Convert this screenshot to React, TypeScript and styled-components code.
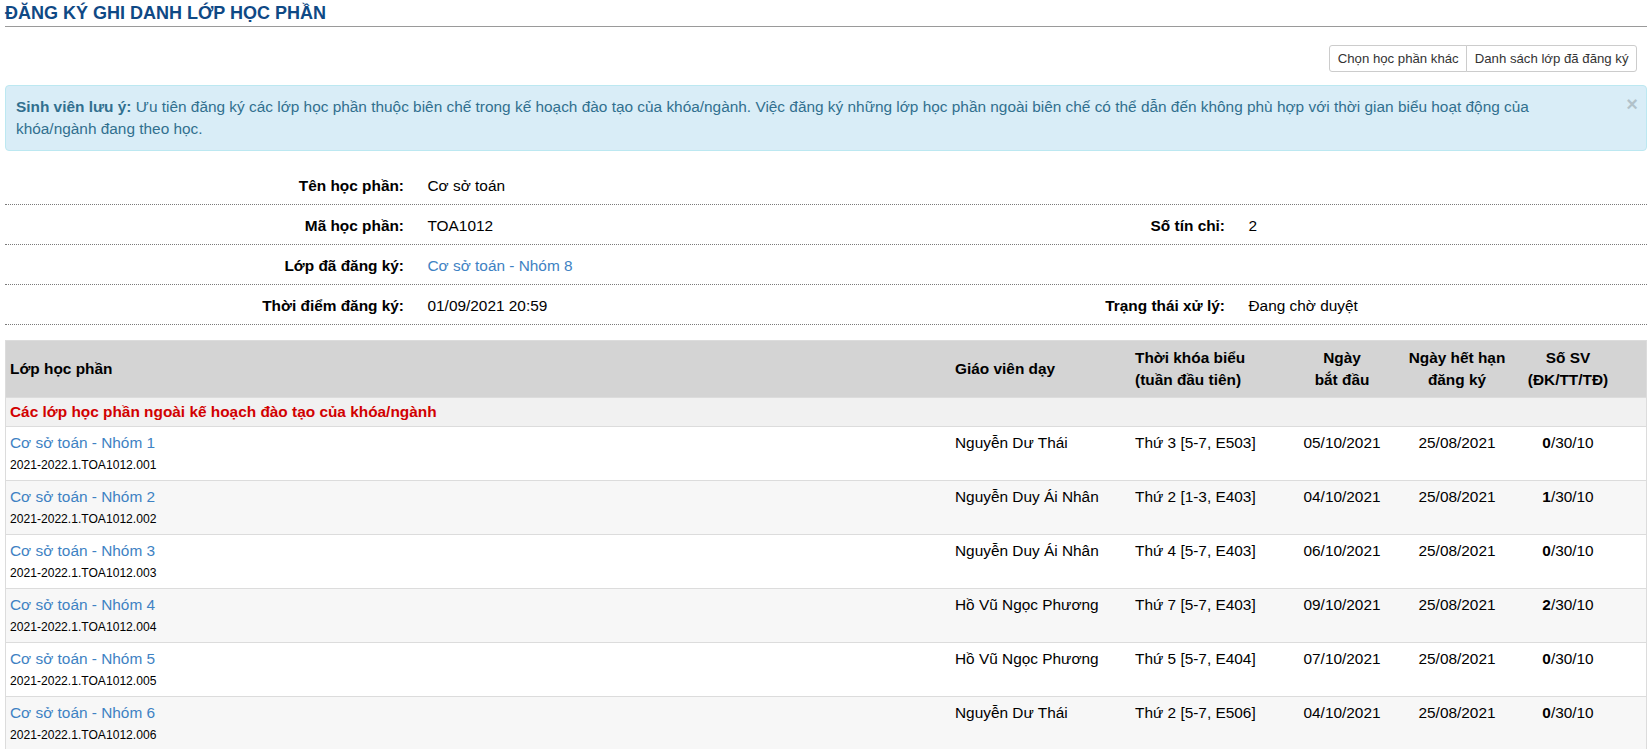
import React from "react";
import styled, { createGlobalStyle } from "styled-components";

const Global = createGlobalStyle`
  html, body { margin: 0; padding: 0; background: #fff; }
  body {
    font-family: "Liberation Sans", Arial, sans-serif;
    font-size: 15.4px;
    line-height: 22px;
    color: #000;
  }
`;

const Page = styled.div`
  padding: 0 4px 0 5px;
`;

const Title = styled.h1`
  margin: 0;
  padding: 3px 0;
  font-size: 18px;
  line-height: 20px;
  font-weight: bold;
  color: #0f4985;
  border-bottom: 1px solid #9a9a9a;
`;

const Toolbar = styled.div`
  display: flex;
  justify-content: flex-end;
  margin-top: 18px;
  padding-right: 10px;
`;

const ButtonGroup = styled.div`
  display: flex;
`;

const Button = styled.button`
  font-family: "Liberation Sans", Arial, sans-serif;
  font-size: 13.2px;
  line-height: 19px;
  padding: 3px 7.5px;
  border: 1px solid #ccc;
  background: #fff;
  color: #333;
  cursor: pointer;
  border-radius: 0;
  & + & { margin-left: -1px; }
  &:first-child { border-radius: 3px 0 0 3px; }
  &:last-child { border-radius: 0 3px 3px 0; }
`;

const Alert = styled.div`
  margin-top: 13px;
  display: flex;
  align-items: flex-start;
  padding: 10px 8px 10px 10px;
  border: 1px solid #bce8f1;
  border-radius: 4px;
  background: #d9edf7;
  color: #31708f;
`;

const AlertText = styled.div`
  flex: 1;
  padding-right: 20px;
`;

const Close = styled.button`
  border: 0;
  background: transparent;
  padding: 0;
  margin-top: -3px;
  font-family: "Liberation Sans", Arial, sans-serif;
  font-size: 20px;
  line-height: 22px;
  font-weight: bold;
  color: #000;
  opacity: 0.18;
  cursor: pointer;
`;

const Info = styled.div`
  margin-top: 14px;
`;

const InfoRow = styled.div`
  box-sizing: border-box;
  display: grid;
  grid-template-columns: repeat(4, 1fr);
  align-items: center;
  height: 40px;
  padding-top: 3px;
  border-bottom: 1px dotted #7a7a7a;
`;

const Label = styled.div`
  font-weight: bold;
  text-align: right;
  padding-right: 11.5px;
`;

const Value = styled.div`
  padding-left: 12px;
`;

const Link = styled.a`
  color: #3e82c3;
  text-decoration: none;
  cursor: pointer;
`;

const Table = styled.table`
  margin-top: 15px;
  width: 100%;
  border-collapse: collapse;
  table-layout: fixed;
  border: 1px solid #dcdcdc;
`;

const Th = styled.th<{ $w?: number; $align?: string }>`
  width: ${(p) => (p.$w ? `${p.$w}px` : "auto")};
  background: #d4d4d4;
  padding: 6px 4px;
  font-weight: bold;
  text-align: ${(p) => p.$align || "left"};
  vertical-align: middle;
  line-height: 22px;
`;

const GroupCell = styled.td`
  background: #f1f1f1;
  color: #d20000;
  font-weight: bold;
  padding: 3px 4px;
  border-top: 1px solid #dcdcdc;
`;

const Row = styled.tr<{ $striped: boolean }>`
  background: ${(p) => (p.$striped ? "#f7f7f7" : "#fff")};
`;

const Td = styled.td<{ $align?: string }>`
  padding: 5px 4px 4px;
  vertical-align: top;
  text-align: ${(p) => p.$align || "left"};
  border-top: 1px solid #dcdcdc;
`;

const Code = styled.div`
  font-size: 12.1px;
  line-height: 22px;
`;

const rows = [
  { n: 1, t: "Nguyễn Dư Thái", s: "Thứ 3 [5-7, E503]", d: "05/10/2021", c: 0 },
  { n: 2, t: "Nguyễn Duy Ái Nhân", s: "Thứ 2 [1-3, E403]", d: "04/10/2021", c: 1 },
  { n: 3, t: "Nguyễn Duy Ái Nhân", s: "Thứ 4 [5-7, E403]", d: "06/10/2021", c: 0 },
  { n: 4, t: "Hồ Vũ Ngọc Phương", s: "Thứ 7 [5-7, E403]", d: "09/10/2021", c: 2 },
  { n: 5, t: "Hồ Vũ Ngọc Phương", s: "Thứ 5 [5-7, E404]", d: "07/10/2021", c: 0 },
  { n: 6, t: "Nguyễn Dư Thái", s: "Thứ 2 [5-7, E506]", d: "04/10/2021", c: 0 },
];

export default function App() {
  return (
    <>
      <Global />
      <Page>
        <Title>ĐĂNG KÝ GHI DANH LỚP HỌC PHẦN</Title>
        <Toolbar>
          <ButtonGroup>
            <Button>Chọn học phần khác</Button>
            <Button>Danh sách lớp đã đăng ký</Button>
          </ButtonGroup>
        </Toolbar>
        <Alert>
          <AlertText>
            <b>Sinh viên lưu ý:</b> Ưu tiên đăng ký các lớp học phần thuộc biên chế trong kế hoạch đào tạo của
            khóa/ngành. Việc đăng ký những lớp học phần ngoài biên chế có thể dẫn đến không phù hợp với thời gian
            biểu hoạt động của khóa/ngành đang theo học.
          </AlertText>
          <Close aria-label="close">×</Close>
        </Alert>
        <Info>
          <InfoRow>
            <Label>Tên học phần:</Label>
            <Value>Cơ sở toán</Value>
            <Label />
            <Value />
          </InfoRow>
          <InfoRow>
            <Label>Mã học phần:</Label>
            <Value>TOA1012</Value>
            <Label>Số tín chỉ:</Label>
            <Value>2</Value>
          </InfoRow>
          <InfoRow>
            <Label>Lớp đã đăng ký:</Label>
            <Value>
              <Link>Cơ sở toán - Nhóm 8</Link>
            </Value>
            <Label />
            <Value />
          </InfoRow>
          <InfoRow>
            <Label>Thời điểm đăng ký:</Label>
            <Value>01/09/2021 20:59</Value>
            <Label>Trạng thái xử lý:</Label>
            <Value>Đang chờ duyệt</Value>
          </InfoRow>
        </Info>
        <Table>
          <thead>
            <tr>
              <Th $w={937}>Lớp học phần</Th>
              <Th $w={172}>Giáo viên dạy</Th>
              <Th $w={152}>
                Thời khóa biểu
                <br />
                (tuần đầu tiên)
              </Th>
              <Th $w={94} $align="center">
                Ngày
                <br />
                bắt đầu
              </Th>
              <Th $w={120} $align="center">
                Ngày hết hạn
                <br />
                đăng ký
              </Th>
              <Th $w={86} $align="center">
                Số SV
                <br />
                (ĐK/TT/TĐ)
              </Th>
              <Th />
            </tr>
          </thead>
          <tbody>
            <tr>
              <GroupCell colSpan={7}>Các lớp học phần ngoài kế hoạch đào tạo của khóa/ngành</GroupCell>
            </tr>
            {rows.map((r, i) => (
              <Row key={r.n} $striped={i % 2 === 1}>
                <Td>
                  <Link>Cơ sở toán - Nhóm {r.n}</Link>
                  <Code>2021-2022.1.TOA1012.00{r.n}</Code>
                </Td>
                <Td>{r.t}</Td>
                <Td>{r.s}</Td>
                <Td $align="center">{r.d}</Td>
                <Td $align="center">25/08/2021</Td>
                <Td $align="center">
                  <b>{r.c}</b>/30/10
                </Td>
                <Td />
              </Row>
            ))}
          </tbody>
        </Table>
      </Page>
    </>
  );
}
